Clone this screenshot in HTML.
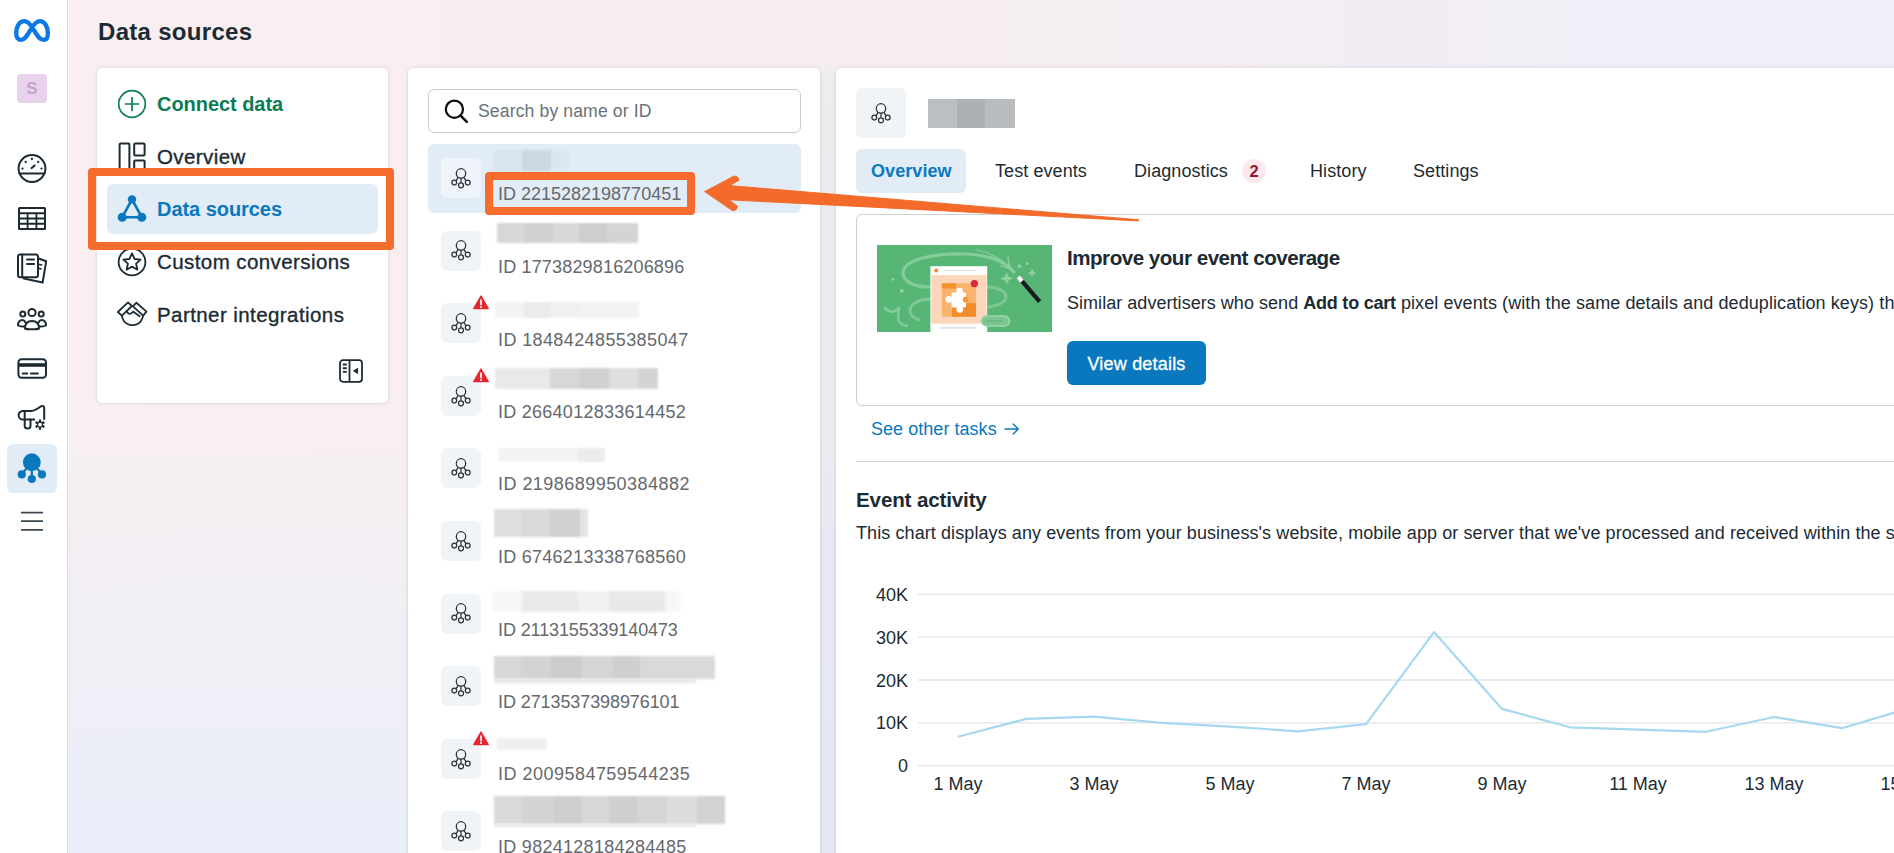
<!DOCTYPE html>
<html lang="en">
<head>
<meta charset="utf-8">
<title>Data sources</title>
<style>
*{box-sizing:border-box;margin:0;padding:0}
html,body{width:1894px;height:853px;overflow:hidden}
body{position:relative;font-family:"Liberation Sans",sans-serif;color:#1c2b33;
background:linear-gradient(180deg,rgba(233,238,249,0) 45%,rgba(233,238,249,1) 100%),linear-gradient(90deg,#f9eff0 0%,#f8eef0 38%,#f2edf4 72%,#efeef9 100%);}
.abs{position:absolute}
.t{position:absolute;white-space:nowrap;line-height:1}
/* rail */
#rail{position:absolute;left:0;top:0;width:68px;height:853px;background:#fff;border-right:1px solid #dedbdc}
/* cards */
.card{position:absolute;background:#fff;border-radius:5px;box-shadow:0 0 0 1px rgba(0,0,0,.025),0 0 5px rgba(0,0,0,.09)}
#nav{left:97px;top:68.4px;width:291px;height:334.5px}
#list{left:407.6px;top:68.4px;width:412px;height:820px}
#main{left:836px;top:68.4px;width:1100px;height:820px}
.nt{font-size:20.5px;letter-spacing:.42px;-webkit-text-stroke:.35px currentColor}
.nb{font-size:20px;font-weight:bold;letter-spacing:-.05px}
.idt{font-size:18px;color:#65686c;left:498px}
.ibox{position:absolute;left:441px;width:40px;height:40px;border-radius:6px;background:#f1f4f7}
.tab{font-size:18px;top:161.5px;letter-spacing:.08px}
.body17{font-size:18px;letter-spacing:.04px}
</style>
</head>
<body>

<div id="rail">
<!-- meta logo -->
<svg class="abs" style="left:12px;top:16px" width="40" height="30" viewBox="0 0 40 30">
<path d="M4.2 17.5 C4.2 9.5 8.2 5.2 12.2 5.2 C16 5.2 18.6 8.6 21.6 13.6 C25.2 19.6 27.6 23.9 31.6 23.9 C34.6 23.9 35.9 21.2 35.9 17.2 C35.9 10.2 32.2 5.2 27.9 5.2 C24.4 5.2 21.8 8.4 18.9 13.2 C15.6 18.7 13.2 23.9 9.2 23.9 C6 23.9 4.2 21.3 4.2 17.5 Z" fill="none" stroke="#0a78e6" stroke-width="4.3" stroke-linejoin="round"/>
</svg>
<!-- avatar -->
<div class="abs" style="left:17px;top:74px;width:30px;height:29px;border-radius:4px;background:#e9d2ec"></div>
<div class="t" style="left:17px;top:80px;width:30px;text-align:center;font-size:17px;font-weight:bold;color:#c3a3cb;filter:blur(.5px)">S</div>

<!-- gauge -->
<svg class="abs" style="left:14px;top:150px" width="36" height="36" viewBox="0 0 36 36" fill="none" stroke="#1c2b33" stroke-width="2" stroke-linecap="round">
<circle cx="18" cy="18.5" r="13.4"/>
<path d="M5.6 23.6 H30.4"/>
<path d="M17.7 18 L20.6 15.5" stroke-width="2.2"/>
<g fill="#1c2b33" stroke="none"><circle cx="8.5" cy="18.6" r="1.15"/><circle cx="11.7" cy="11.9" r="1.15"/><circle cx="17.9" cy="9" r="1.15"/><circle cx="24.2" cy="11.9" r="1.15"/><circle cx="27.5" cy="18.6" r="1.15"/></g>
</svg>

<!-- table -->
<svg class="abs" style="left:14px;top:200px" width="36" height="36" viewBox="0 0 36 36" fill="none" stroke="#1c2b33" stroke-width="2">
<rect x="5" y="8" width="26" height="21" rx="0.5"/>
<path d="M5 13.25 H31 M5 18.5 H31 M5 23.75 H31 M13.6 13.25 V29 M22.4 13.25 V29" stroke-width="1.8"/>
</svg>

<!-- docs -->
<svg class="abs" style="left:14px;top:250px" width="36" height="36" viewBox="0 0 36 36" fill="none" stroke="#1c2b33" stroke-width="2" stroke-linejoin="round" stroke-linecap="round">
<path d="M24 8.3 L32.2 11.2 L28.6 32.6 L9.8 28.6 L10 27"/>
<path d="M24.5 14.2 L27.6 15 M24.2 18.2 L26.9 18.9" stroke-width="1.7"/>
<rect x="4" y="4.6" width="20" height="22.6" rx="2.2" fill="#fff"/>
<path d="M8.2 4.6 V27.2"/>
<path d="M13 9.4 H20 M13 13.9 H20"/>
</svg>

<!-- people -->
<svg class="abs" style="left:14px;top:301px" width="36" height="36" viewBox="0 0 36 36" fill="none" stroke="#1c2b33" stroke-width="2" stroke-linejoin="round" stroke-linecap="round">
<circle cx="18" cy="11.5" r="3.6"/>
<circle cx="8.8" cy="13" r="2.5"/>
<circle cx="27.2" cy="13" r="2.5"/>
<path d="M11 27.5 C11 23 13.5 20 18 20 C22.5 20 25 23 25 27.5 C23 28.6 13 28.6 11 27.5 Z"/>
<path d="M11.5 21.5 C10.5 19.5 9.8 19 8.5 19 C5.5 19 4 21.2 4 24.5 C5.5 25.4 8.5 25.6 10.5 25.4"/>
<path d="M24.5 21.5 C25.5 19.5 26.2 19 27.5 19 C30.5 19 32 21.2 32 24.5 C30.5 25.4 27.5 25.6 25.5 25.4"/>
</svg>

<!-- credit card -->
<svg class="abs" style="left:14px;top:350px" width="36" height="36" viewBox="0 0 36 36" fill="none" stroke="#1c2b33" stroke-width="2" stroke-linecap="round">
<rect x="4.4" y="9.3" width="27.6" height="18.4" rx="3.2"/>
<path d="M4.4 15 H32" stroke-width="3.6" stroke-linecap="butt"/>
<path d="M8.6 23.5 H13.4 M16.8 23.5 H24" stroke-width="1.8"/>
</svg>

<!-- megaphone gear -->
<svg class="abs" style="left:14px;top:400px" width="36" height="36" viewBox="0 0 36 36" fill="none" stroke="#1c2b33" stroke-width="2" stroke-linejoin="round" stroke-linecap="round">
<path d="M30.2 19 V8 C30.2 6.2 28.6 5.4 27 6.3 C23 9.2 21 10.9 17.5 10.9 H9 C6.3 10.9 4.6 12.9 4.6 15.2 C4.6 17.6 6.3 19.6 9 19.6 H20.3"/>
<path d="M10.7 10.9 V26 C10.7 27.6 12 28.5 13.6 28.5 C15.2 28.5 16.5 27.6 16.5 26 V19.6"/>
<g transform="translate(26 24.6)" stroke="none" fill="#1c2b33"><path d="M-1.17 -5.07 L1.17 -5.07 L1.15 -2.99 L2.01 -2.49 L3.80 -3.55 L4.97 -1.52 L3.16 -0.50 L3.16 0.50 L4.97 1.52 L3.80 3.55 L2.01 2.49 L1.15 2.99 L1.17 5.07 L-1.17 5.07 L-1.15 2.99 L-2.01 2.49 L-3.80 3.55 L-4.97 1.52 L-3.16 0.50 L-3.16 -0.50 L-4.97 -1.52 L-3.80 -3.55 L-2.01 -2.49 L-1.15 -2.99 Z M0 -1.9 A1.9 1.9 0 1 0 0 1.9 A1.9 1.9 0 1 0 0 -1.9 Z" fill-rule="evenodd"/></g>
</svg>

<!-- active data sources -->
<div class="abs" style="left:7px;top:444px;width:50px;height:49px;border-radius:6px;background:#e1ecf6"></div>
<svg class="abs" style="left:14px;top:450px" width="36" height="36" viewBox="0 0 36 36" fill="#0a78be" stroke="#0a78be" stroke-width="2.2">
<circle cx="17.8" cy="12.2" r="8.9" stroke="none"/>
<path d="M17.8 14 V27 M14 17 L8 23.6 M21.6 17 L27.8 23.6" fill="none"/>
<circle cx="7.8" cy="24.4" r="4.1" stroke="none"/>
<circle cx="28" cy="24.4" r="4.1" stroke="none"/>
<circle cx="17.8" cy="29" r="4.1" stroke="none"/>
</svg>

<!-- hamburger -->
<svg class="abs" style="left:14px;top:503px" width="36" height="36" viewBox="0 0 36 36" fill="none" stroke="#3a4750" stroke-width="1.8">
<path d="M7 9.7 H29 M7 18.2 H29 M7 26.8 H29"/>
</svg>
</div>

<div class="t" id="title" style="left:98px;top:20px;font-size:24px;font-weight:bold;letter-spacing:.3px">Data sources</div>

<div class="abs" style="left:812px;top:60px;width:32px;height:800px;background:linear-gradient(180deg,rgba(239,236,239,0) 0,#efecef 2%,#ecebf1 40%,#e8e8f3 65%,#e3e8f4 100%);-webkit-mask-image:linear-gradient(90deg,transparent 0,#000 30%,#000 70%,transparent 100%);mask-image:linear-gradient(90deg,transparent 0,#000 30%,#000 70%,transparent 100%)"></div>
<div class="card" id="nav"></div>
<!-- nav contents (page coords) -->
<div class="abs" style="left:107px;top:183.6px;width:271px;height:50px;border-radius:6px;background:#e1ecf6"></div>

<!-- connect data -->
<svg class="abs" style="left:116px;top:88px" width="32" height="32" viewBox="0 0 32 32" fill="none" stroke="#0b7d55" stroke-width="1.7" stroke-linecap="round">
<circle cx="16" cy="16" r="13.3"/><path d="M16 9.5 V22.5 M9.5 16 H22.5"/></svg>
<div class="t nb" id="n1" style="left:157px;top:94.4px;color:#0b7d55">Connect data</div>

<!-- overview -->
<svg class="abs" style="left:116px;top:140px" width="32" height="32" viewBox="0 0 32 32" fill="none" stroke="#1c2b33" stroke-width="2">
<rect x="3.6" y="3.6" width="9.8" height="26" rx="1"/>
<rect x="18.2" y="3.6" width="10.4" height="12" rx="1"/>
<rect x="18.2" y="20.6" width="10.4" height="9" rx="1"/>
</svg>
<div class="t nt" id="n2" style="left:157px;top:147px">Overview</div>

<!-- data sources -->
<svg class="abs" style="left:116px;top:193px" width="32" height="32" viewBox="0 0 32 32" fill="#0a78be" stroke="#0a78be" stroke-width="2.6" stroke-linejoin="round">
<path d="M16 6.5 L6.2 24.2 H25.8 Z" fill="none"/>
<circle cx="16" cy="6.4" r="4.2" stroke="none"/>
<circle cx="6.2" cy="24.2" r="4.5" stroke="none"/>
<circle cx="25.8" cy="24.2" r="4.5" stroke="none"/>
</svg>
<div class="t nb" id="n3" style="left:157px;top:199.4px;color:#0a78be">Data sources</div>

<!-- custom conversions -->
<svg class="abs" style="left:116px;top:245.5px" width="32" height="32" viewBox="0 0 32 32" fill="none" stroke="#1c2b33" stroke-width="1.8" stroke-linejoin="round">
<circle cx="16" cy="16" r="13.4"/>
<path d="M16 7.4 L18.6 13 L24.6 13.6 L20.1 17.7 L21.4 23.7 L16 20.6 L10.6 23.7 L11.9 17.7 L7.4 13.6 L13.4 13 Z"/>
</svg>
<div class="t nt" id="n4" style="left:157px;top:252px">Custom conversions</div>

<!-- partner integrations -->
<svg class="abs" style="left:116px;top:298px" width="32" height="32" viewBox="0 0 32 32" fill="none" stroke="#1c2b33" stroke-width="1.8" stroke-linejoin="round" stroke-linecap="round">
<path d="M1.9 14 L12 4.4 L16 8 L5.8 17.6 Z"/>
<path d="M20.4 4.7 L30.5 13.6 L27.1 17.6 L17 8.3 Z"/>
<path d="M5.8 17.6 C6.6 22 9 25.4 13 26.6 C15 27.2 19 27.2 21 26.3 C24 24.9 26.4 21.2 27.1 17.6"/>
<path d="M10.6 13.2 C12 16.6 15.2 16.6 17 13.6 L23.6 18.2"/>
</svg>
<div class="t nt" id="n5" style="left:157px;top:305px">Partner integrations</div>

<!-- collapse icon -->
<svg class="abs" style="left:338px;top:358px" width="26" height="26" viewBox="0 0 26 26" fill="none" stroke="#1c2b33" stroke-width="1.8" stroke-linejoin="round">
<rect x="2" y="2.2" width="22" height="21.6" rx="3"/>
<path d="M11.5 2.2 V23.8"/>
<path d="M4.8 6.5 H8.8 M4.8 10.2 H8.8 M4.8 13.9 H8.8" stroke-width="1.9"/>
<path d="M19.6 10.4 L15.6 12.9 L19.6 15.4 Z" fill="#1c2b33" stroke-width="1"/>
</svg>

<!-- orange annotation box 1 -->
<div class="abs" style="left:88.3px;top:168.2px;width:305.6px;height:82.2px;border:8.3px solid #f56c2d;border-radius:4px"></div>
<div class="card" id="list"></div>
<!-- list contents -->
<div class="abs" style="left:428px;top:89px;width:373px;height:44px;border:1px solid #c8cbce;border-radius:6px;background:#fff"></div>
<svg class="abs" style="left:441px;top:96px" width="30" height="30" viewBox="0 0 30 30" fill="none" stroke="#0b0d0e" stroke-width="2.2" stroke-linecap="round"><circle cx="13.4" cy="13.2" r="8.6"/><path d="M19.6 19.6 L25.8 25.8" stroke-width="2.6"/></svg>
<div class="t" id="ph" style="left:478px;top:103.2px;font-size:17.6px;color:#6a7178;letter-spacing:.12px">Search by name or ID</div>
<div class="abs" style="left:428px;top:144px;width:373px;height:69px;border-radius:6px;background:#e1ecf6"></div>
<div class="ibox" style="top:158.0px;background:rgba(255,255,255,.45)"></div>
<svg class="abs" style="left:449px;top:165.7px" width="24" height="24" viewBox="0 0 24 24" fill="none" stroke="#2a3036" stroke-width="1.25"><circle cx="12" cy="7.4" r="4.7"/><path d="M12 12.1 V16.7 M9.3 11.2 L7.1 14.6 M14.7 11.2 L16.9 14.6"/><circle cx="5.3" cy="16.6" r="2.4"/><circle cx="12" cy="19.3" r="2.5"/><circle cx="18.7" cy="16.6" r="2.4"/></svg>
<div class="t idt" id="id0" style="top:184.6px;letter-spacing:0.00px">ID 2215282198770451</div>
<div class="ibox" style="top:230.6px;background:#f1f4f7"></div>
<svg class="abs" style="left:449px;top:238.3px" width="24" height="24" viewBox="0 0 24 24" fill="none" stroke="#2a3036" stroke-width="1.25"><circle cx="12" cy="7.4" r="4.7"/><path d="M12 12.1 V16.7 M9.3 11.2 L7.1 14.6 M14.7 11.2 L16.9 14.6"/><circle cx="5.3" cy="16.6" r="2.4"/><circle cx="12" cy="19.3" r="2.5"/><circle cx="18.7" cy="16.6" r="2.4"/></svg>
<div class="t idt" id="id1" style="top:257.6px;letter-spacing:0.17px">ID 1773829816206896</div>
<div class="ibox" style="top:303.2px;background:#f1f4f7"></div>
<svg class="abs" style="left:449px;top:310.9px" width="24" height="24" viewBox="0 0 24 24" fill="none" stroke="#2a3036" stroke-width="1.25"><circle cx="12" cy="7.4" r="4.7"/><path d="M12 12.1 V16.7 M9.3 11.2 L7.1 14.6 M14.7 11.2 L16.9 14.6"/><circle cx="5.3" cy="16.6" r="2.4"/><circle cx="12" cy="19.3" r="2.5"/><circle cx="18.7" cy="16.6" r="2.4"/></svg>
<div class="t idt" id="id2" style="top:330.6px;letter-spacing:0.39px">ID 1848424855385047</div>
<div class="ibox" style="top:375.8px;background:#f1f4f7"></div>
<svg class="abs" style="left:449px;top:383.5px" width="24" height="24" viewBox="0 0 24 24" fill="none" stroke="#2a3036" stroke-width="1.25"><circle cx="12" cy="7.4" r="4.7"/><path d="M12 12.1 V16.7 M9.3 11.2 L7.1 14.6 M14.7 11.2 L16.9 14.6"/><circle cx="5.3" cy="16.6" r="2.4"/><circle cx="12" cy="19.3" r="2.5"/><circle cx="18.7" cy="16.6" r="2.4"/></svg>
<div class="t idt" id="id3" style="top:402.6px;letter-spacing:0.26px">ID 2664012833614452</div>
<div class="ibox" style="top:448.4px;background:#f1f4f7"></div>
<svg class="abs" style="left:449px;top:456.1px" width="24" height="24" viewBox="0 0 24 24" fill="none" stroke="#2a3036" stroke-width="1.25"><circle cx="12" cy="7.4" r="4.7"/><path d="M12 12.1 V16.7 M9.3 11.2 L7.1 14.6 M14.7 11.2 L16.9 14.6"/><circle cx="5.3" cy="16.6" r="2.4"/><circle cx="12" cy="19.3" r="2.5"/><circle cx="18.7" cy="16.6" r="2.4"/></svg>
<div class="t idt" id="id4" style="top:474.6px;letter-spacing:0.46px">ID 2198689950384882</div>
<div class="ibox" style="top:521.0px;background:#f1f4f7"></div>
<svg class="abs" style="left:449px;top:528.7px" width="24" height="24" viewBox="0 0 24 24" fill="none" stroke="#2a3036" stroke-width="1.25"><circle cx="12" cy="7.4" r="4.7"/><path d="M12 12.1 V16.7 M9.3 11.2 L7.1 14.6 M14.7 11.2 L16.9 14.6"/><circle cx="5.3" cy="16.6" r="2.4"/><circle cx="12" cy="19.3" r="2.5"/><circle cx="18.7" cy="16.6" r="2.4"/></svg>
<div class="t idt" id="id5" style="top:547.6px;letter-spacing:0.26px">ID 6746213338768560</div>
<div class="ibox" style="top:593.6px;background:#f1f4f7"></div>
<svg class="abs" style="left:449px;top:601.3px" width="24" height="24" viewBox="0 0 24 24" fill="none" stroke="#2a3036" stroke-width="1.25"><circle cx="12" cy="7.4" r="4.7"/><path d="M12 12.1 V16.7 M9.3 11.2 L7.1 14.6 M14.7 11.2 L16.9 14.6"/><circle cx="5.3" cy="16.6" r="2.4"/><circle cx="12" cy="19.3" r="2.5"/><circle cx="18.7" cy="16.6" r="2.4"/></svg>
<div class="t idt" id="id6" style="top:620.6px;letter-spacing:-0.11px">ID 2113155339140473</div>
<div class="ibox" style="top:666.2px;background:#f1f4f7"></div>
<svg class="abs" style="left:449px;top:673.9px" width="24" height="24" viewBox="0 0 24 24" fill="none" stroke="#2a3036" stroke-width="1.25"><circle cx="12" cy="7.4" r="4.7"/><path d="M12 12.1 V16.7 M9.3 11.2 L7.1 14.6 M14.7 11.2 L16.9 14.6"/><circle cx="5.3" cy="16.6" r="2.4"/><circle cx="12" cy="19.3" r="2.5"/><circle cx="18.7" cy="16.6" r="2.4"/></svg>
<div class="t idt" id="id7" style="top:692.6px;letter-spacing:-0.09px">ID 2713537398976101</div>
<div class="ibox" style="top:738.8px;background:#f1f4f7"></div>
<svg class="abs" style="left:449px;top:746.5px" width="24" height="24" viewBox="0 0 24 24" fill="none" stroke="#2a3036" stroke-width="1.25"><circle cx="12" cy="7.4" r="4.7"/><path d="M12 12.1 V16.7 M9.3 11.2 L7.1 14.6 M14.7 11.2 L16.9 14.6"/><circle cx="5.3" cy="16.6" r="2.4"/><circle cx="12" cy="19.3" r="2.5"/><circle cx="18.7" cy="16.6" r="2.4"/></svg>
<div class="t idt" id="id8" style="top:764.6px;letter-spacing:0.48px">ID 2009584759544235</div>
<div class="ibox" style="top:811.4px;background:#f1f4f7"></div>
<svg class="abs" style="left:449px;top:819.1px" width="24" height="24" viewBox="0 0 24 24" fill="none" stroke="#2a3036" stroke-width="1.25"><circle cx="12" cy="7.4" r="4.7"/><path d="M12 12.1 V16.7 M9.3 11.2 L7.1 14.6 M14.7 11.2 L16.9 14.6"/><circle cx="5.3" cy="16.6" r="2.4"/><circle cx="12" cy="19.3" r="2.5"/><circle cx="18.7" cy="16.6" r="2.4"/></svg>
<div class="t idt" id="id9" style="top:837.6px;letter-spacing:0.28px">ID 9824128184284485</div>
<svg class="abs" style="left:472.6px;top:295.0px" width="16" height="15" viewBox="0 0 16 15"><path d="M8 1 L15.2 13.6 H0.8 Z" fill="#e8252f" stroke="#e8252f" stroke-width="1.4" stroke-linejoin="round"/><path d="M8 5 V9.6" stroke="#fff" stroke-width="1.7" stroke-linecap="round"/><circle cx="8" cy="12" r="1" fill="#fff"/></svg>
<svg class="abs" style="left:472.6px;top:367.6px" width="16" height="15" viewBox="0 0 16 15"><path d="M8 1 L15.2 13.6 H0.8 Z" fill="#e8252f" stroke="#e8252f" stroke-width="1.4" stroke-linejoin="round"/><path d="M8 5 V9.6" stroke="#fff" stroke-width="1.7" stroke-linecap="round"/><circle cx="8" cy="12" r="1" fill="#fff"/></svg>
<svg class="abs" style="left:472.6px;top:730.6px" width="16" height="15" viewBox="0 0 16 15"><path d="M8 1 L15.2 13.6 H0.8 Z" fill="#e8252f" stroke="#e8252f" stroke-width="1.4" stroke-linejoin="round"/><path d="M8 5 V9.6" stroke="#fff" stroke-width="1.7" stroke-linecap="round"/><circle cx="8" cy="12" r="1" fill="#fff"/></svg>
<div class="abs" style="left:494px;top:150px;width:75px;height:21px;background:linear-gradient(90deg,#d9e4ee 0%,#d9e4ee 38%,#cbd8e2 38%,#cbd8e2 76%,#dbe6f0 76%,#dbe6f0 100%);filter:blur(1.2px)"></div>
<div class="abs" style="left:497px;top:223px;width:141px;height:20px;background:linear-gradient(90deg,#d6d7d8 0%,#d6d7d8 20%,#d0d1d2 20%,#d0d1d2 40%,#d8d8d9 40%,#d8d8d9 58%,#cdcecf 58%,#cdcecf 78%,#d3d4d5 78%,#d3d4d5 100%);filter:blur(0.8px)"></div>
<div class="abs" style="left:495px;top:302px;width:144px;height:16px;background:linear-gradient(90deg,#f3f3f4 0%,#f3f3f4 20%,#ebebec 20%,#ebebec 38%,#f0f0f1 38%,#f0f0f1 60%,#f2f2f3 60%,#f2f2f3 100%);filter:blur(1.2px)"></div>
<div class="abs" style="left:495px;top:368px;width:163px;height:21px;background:linear-gradient(90deg,#e9e9ea 0%,#e9e9ea 34%,#d6d7d8 34%,#d6d7d8 52%,#cfd0d1 52%,#cfd0d1 70%,#dddedf 70%,#dddedf 88%,#d3d4d5 88%,#d3d4d5 100%);filter:blur(1.0px)"></div>
<div class="abs" style="left:498px;top:448px;width:107px;height:14px;background:linear-gradient(90deg,#f3f3f4 0%,#f3f3f4 75%,#ececed 75%,#ececed 100%);filter:blur(1.2px)"></div>
<div class="abs" style="left:494px;top:509px;width:94px;height:28px;background:linear-gradient(90deg,#dedfe0 0%,#dedfe0 30%,#d8d9da 30%,#d8d9da 60%,#d0d1d2 60%,#d0d1d2 92%,#e4e4e5 92%,#e4e4e5 100%);filter:blur(1.2px)"></div>
<div class="abs" style="left:492px;top:591px;width:188px;height:21px;background:linear-gradient(90deg,#f7f7f8 0%,#f7f7f8 16%,#e9e9ea 16%,#e9e9ea 46%,#f1f1f2 46%,#f1f1f2 62%,#e8e8e9 62%,#e8e8e9 92%,#f6f6f7 92%,#f6f6f7 100%);filter:blur(1.4px)"></div>
<div class="abs" style="left:494px;top:656px;width:221px;height:23px;background:linear-gradient(90deg,#d7d8d9 0%,#d7d8d9 12%,#d2d3d4 12%,#d2d3d4 26%,#cbcccd 26%,#cbcccd 40%,#d5d6d7 40%,#d5d6d7 54%,#cecfd0 54%,#cecfd0 66%,#d8d9da 66%,#d8d9da 100%);filter:blur(0.8px)"></div>
<div class="abs" style="left:494px;top:679px;width:202px;height:4px;background:linear-gradient(90deg,#e6e6e7 0%,#e6e6e7 100%);filter:blur(1.0px)"></div>
<div class="abs" style="left:497px;top:738px;width:50px;height:12px;background:linear-gradient(90deg,#efeff0 0%,#efeff0 100%);filter:blur(1.2px)"></div>
<div class="abs" style="left:494px;top:796px;width:231px;height:28px;background:linear-gradient(90deg,#d8d9da 0%,#d8d9da 12%,#d3d4d5 12%,#d3d4d5 26%,#cdcecf 26%,#cdcecf 38%,#d6d7d8 38%,#d6d7d8 50%,#cecfd0 50%,#cecfd0 62%,#d4d5d6 62%,#d4d5d6 75%,#dcddde 75%,#dcddde 88%,#d1d2d3 88%,#d1d2d3 100%);filter:blur(0.8px)"></div>
<div class="abs" style="left:494px;top:824px;width:202px;height:3px;background:linear-gradient(90deg,#e6e6e7 0%,#e6e6e7 100%);filter:blur(1.0px)"></div>

<div class="card" id="main"></div>
<!-- main contents -->
<div class="abs" style="left:856px;top:88px;width:50px;height:50px;border-radius:6px;background:#f1f4f7"></div>
<svg class="abs" style="left:869px;top:101.4px" width="24" height="24" viewBox="0 0 24 24" fill="none" stroke="#2a3036" stroke-width="1.25"><circle cx="12" cy="7.4" r="4.7"/><path d="M12 12.1 V16.7 M9.3 11.2 L7.1 14.6 M14.7 11.2 L16.9 14.6"/><circle cx="5.3" cy="16.6" r="2.4"/><circle cx="12" cy="19.3" r="2.5"/><circle cx="18.7" cy="16.6" r="2.4"/></svg>
<div class="abs" style="left:928px;top:99px;width:87px;height:29px;background:linear-gradient(90deg,#bcbfc1 0,#bcbfc1 33%,#aeb1b3 33%,#aeb1b3 66%,#b9bcbe 66%,#b9bcbe 100%);filter:blur(.5px)"></div>

<!-- tabs -->
<div class="abs" style="left:856px;top:149px;width:110px;height:44px;border-radius:6px;background:#e1ecf6"></div>
<div class="t tab" id="t1" style="left:871px;font-weight:bold;color:#0a78be">Overview</div>
<div class="t tab" id="t2" style="left:995px">Test events</div>
<div class="t tab" id="t3" style="left:1134px">Diagnostics</div>
<div class="abs" style="left:1242px;top:159px;width:24px;height:24px;border-radius:12px;background:#fde9ec"></div>
<div class="t" id="t3b" style="left:1242px;top:163px;width:24px;text-align:center;font-size:16.5px;font-weight:bold;color:#8f1530">2</div>
<div class="t tab" id="t4" style="left:1310px">History</div>
<div class="t tab" id="t5" style="left:1413px">Settings</div>

<!-- task card -->
<div class="abs" style="left:856px;top:214px;width:1100px;height:192px;border:1px solid #cbd0d5;border-radius:6px;background:#fff"></div>
<div class="t" id="h1" style="left:1067px;top:247.6px;font-size:20.6px;font-weight:bold;letter-spacing:-.5px">Improve your event coverage</div>
<div class="t body17" id="p1" style="left:1067px;top:294px">Similar advertisers who send <b style="letter-spacing:-.22px">Add to cart</b> <span style="letter-spacing:.085px"><span id="m1">pixel</span> events <span id="m2">(with</span> the same details and deduplication <span id="m3">keys)</span> <span id="m4">that</span></span></div>
<div class="abs" style="left:1067px;top:340.5px;width:139px;height:44px;border-radius:6px;background:#0a78be"></div>
<div class="t" id="btn" style="left:1067px;top:354.5px;width:139px;text-align:center;font-size:18px;color:#fff;-webkit-text-stroke:.3px #fff;letter-spacing:.2px">View details</div>
<div class="t body17" id="see" style="left:871px;top:420px;color:#0a78be">See other tasks</div>
<svg class="abs" style="left:1002px;top:419px" width="20" height="20" viewBox="0 0 20 20" fill="none" stroke="#0a78be" stroke-width="1.4" stroke-linecap="round" stroke-linejoin="round"><path d="M3 10 H16 M11.2 5 L16.2 10 L11.2 15"/></svg>
<div class="abs" style="left:856px;top:461px;width:1100px;height:1px;background:#cfd3d7"></div>

<!-- illustration -->
<svg class="abs" style="left:877px;top:245px" width="175" height="87" viewBox="0 0 175 87">
<rect width="175" height="87" fill="#57b576"/>
<g fill="none" stroke="#8ed0a1" stroke-linecap="round">
<path d="M53 42 C36 42 26 36 26 28 C26 15 55 8 90 9 C112 10 128 17 137 27" stroke-width="3.2" opacity=".85"/>
<path d="M100 5 C115 8 128 16 137 27" stroke-width="1.6" opacity=".7"/>
<path d="M131 12 L133 24 L124 21" stroke-width="1.8" opacity=".8" stroke-linejoin="round"/>
<path d="M53 54 C42 54 34 59 33 65 C32 70 37 73 42 75" stroke-width="3" opacity=".75"/>
<path d="M111 42 C122 42 129 47 129 52 C129 57 122 60 112 62" stroke-width="3" opacity=".7"/>
<path d="M8 63 C13 68 19 68 22 62 C21 72 19 79 30 81" stroke-width="2.6" opacity=".8"/>
</g>
<g fill="#8ed0a1">
<path d="M129.5 27 L131.5 31.6 L136.5 33.2 L131.8 35.2 L130 40 L128 35.4 L123 33.6 L127.8 31.8 Z"/>
<path d="M155 23 L156.2 26.6 L159.8 28 L156.2 29.2 L155 33 L153.8 29.2 L150.2 28 L153.8 26.6 Z"/>
<circle cx="142.5" cy="21.2" r="1.9"/><circle cx="150.3" cy="18.4" r="1.5"/>
<circle cx="15.8" cy="34.3" r="1.5"/><rect x="23" y="44" width="3.6" height="3.6" rx=".8"/>
</g>
<rect x="53.4" y="21.2" width="56.8" height="66" fill="#fff"/>
<rect x="54.3" y="30.1" width="55.3" height="48.5" fill="#fbd6b8"/>
<circle cx="59.2" cy="25.4" r="2" fill="#f28c28"/>
<path d="M67 25.4 H99.5" stroke="#dfe3ea" stroke-width="1"/>
<path d="M63 82.8 H99" stroke="#d3d8e2" stroke-width="1.3"/>
<rect x="64.8" y="38.3" width="34.1" height="33.4" fill="#f9b36d"/>
<path d="M64.8 38.3 H79 V43.5 H64.8 Z" fill="#f4922e"/>
<path d="M75 58.2 H98.9 V71.7 H75 Z" fill="#f28c28"/>
<g fill="#fff">
<rect x="74.5" y="47.5" width="14.5" height="15" rx="1.2"/>
<circle cx="82.6" cy="46" r="3.3"/><circle cx="71.8" cy="54.4" r="3.3"/><circle cx="82.8" cy="64.6" r="3.3"/>
</g>
<circle cx="88.6" cy="54.6" r="2.9" fill="#f4963a"/>
<circle cx="97.4" cy="38.6" r="3.6" fill="#d9283a"/>
<rect x="104.5" y="71" width="28" height="10" rx="5" fill="#7cc592" stroke="#9ad6ab" stroke-width="1.6"/>
<path d="M110 76 H126" stroke="#5fb97d" stroke-width="1.2"/>
<path d="M141.6 32.2 L162.6 56.6" stroke="#1b1b1b" stroke-width="4.2"/>
<path d="M141.3 31.9 L145 36.2" stroke="#fff" stroke-width="4.4"/>
</svg>
<!-- chart -->
<svg class="abs" style="left:0;top:560px" width="1894" height="293" viewBox="0 560 1894 293" font-family="'Liberation Sans',sans-serif" font-size="18" fill="#1c2b33">
<path d="M918 594.4 H1894" stroke="#e2e4e7" stroke-width="1.3"/>
<text x="908" y="601.0" text-anchor="end">40K</text>
<path d="M918 637.2 H1894" stroke="#e2e4e7" stroke-width="1.3"/>
<text x="908" y="643.8" text-anchor="end">30K</text>
<path d="M918 680 H1894" stroke="#e2e4e7" stroke-width="1.3"/>
<text x="908" y="686.6" text-anchor="end">20K</text>
<path d="M918 722.8 H1894" stroke="#e2e4e7" stroke-width="1.3"/>
<text x="908" y="729.4" text-anchor="end">10K</text>
<path d="M918 765.6 H1894" stroke="#e2e4e7" stroke-width="1.3"/>
<text x="908" y="772.2" text-anchor="end">0</text>
<polyline points="958,736.8 1026,718.9 1094,716.6 1162,722.8 1230,726.6 1298,731.3 1366,724.2 1434,632.1 1502,708.9 1570,727.3 1638,729.6 1706,731.8 1774,717 1842,728.2 1910,708" fill="none" stroke="#a6d8f1" stroke-width="2.2" stroke-linejoin="round"/>
<text x="958" y="789.6" text-anchor="middle">1 May</text>
<text x="1094" y="789.6" text-anchor="middle">3 May</text>
<text x="1230" y="789.6" text-anchor="middle">5 May</text>
<text x="1366" y="789.6" text-anchor="middle">7 May</text>
<text x="1502" y="789.6" text-anchor="middle">9 May</text>
<text x="1638" y="789.6" text-anchor="middle">11 May</text>
<text x="1774" y="789.6" text-anchor="middle">13 May</text>
<text x="1910" y="789.6" text-anchor="middle">15 May</text>
</svg>
<!-- event activity -->
<div class="t" id="h2" style="left:856px;top:489.6px;font-size:20.6px;font-weight:bold;letter-spacing:-.15px">Event activity</div>
<div class="t body17" id="p2" style="left:856px;top:524px;letter-spacing:.09px">This chart displays any events from your business's website, mobile app or server that we've processed and received within <span id="m5">the</span> <span id="m6">selected</span></div>

<!-- annotations -->
<div class="abs" style="left:485px;top:172px;width:210px;height:42.5px;border:8px solid #f56c2d;border-radius:4px"></div>
<svg class="abs" style="left:0;top:0;pointer-events:none" width="1894" height="853" viewBox="0 0 1894 853">
<path d="M704.6 191.6 L733.8 176.2 Q737.8 175.6 739 180.2 L729.6 185.6 L1138.5 219.7 L1138.5 220.9 L729 199.8 L737.4 206.2 Q737.4 210.3 732.8 210.8 Z" fill="#f36a2b" stroke="#f36a2b" stroke-width="1" stroke-linejoin="round"/>
</svg>
</body>
</html>
